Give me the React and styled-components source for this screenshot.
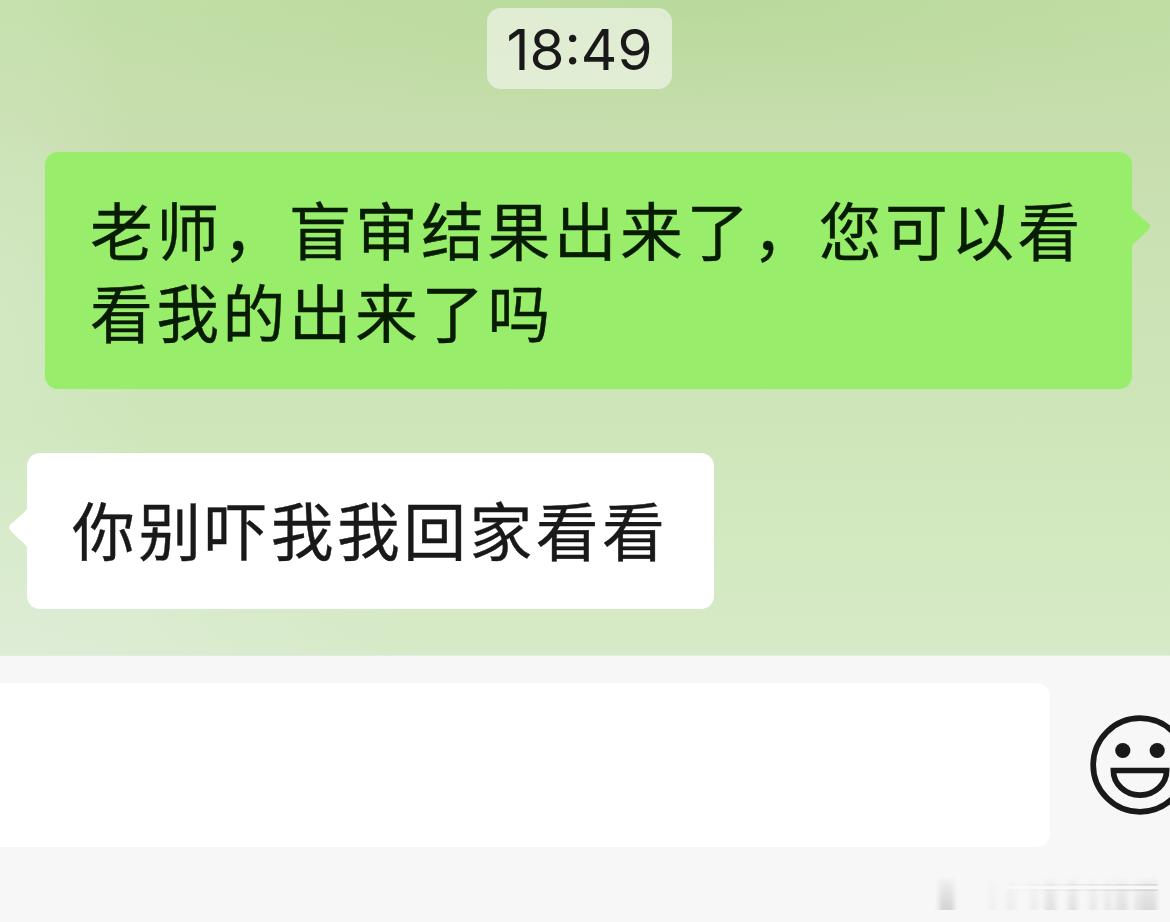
import React from 'react';
import styled, { createGlobalStyle } from 'styled-components';

const GlobalStyle = createGlobalStyle`
  * {
    box-sizing: border-box;
  }

  body {
    margin: 0;
    overflow: hidden;
  }
`;

const Screen = styled.div`
  display: flex;
  flex-direction: column;
  width: 1170px;
  height: 922px;
  overflow: hidden;
  font-family: 'Noto Sans CJK SC', sans-serif;
  color: #191919;
`;

const Conversation = styled.main`
  display: flex;
  flex-direction: column;
  height: 655px;
  padding: 8px 38px 0 27px;
  background:
    radial-gradient(ellipse 420px 260px at 0% 105%, rgba(224, 237, 218, 0.9), rgba(224, 237, 218, 0) 100%),
    radial-gradient(ellipse 150px 420px at 0% 50%, rgba(212, 234, 198, 0.7), rgba(212, 234, 198, 0) 100%),
    radial-gradient(ellipse 680px 130px at 60% 0%, rgba(182, 216, 152, 0.75), rgba(182, 216, 152, 0) 100%),
    linear-gradient(180deg, #c3dfa8 0%, #c7ddad 20%, #cbe2b5 40%, #cee5ba 62%, #d2e9bf 80%, #d6eac7 100%);
`;

const Timestamp = styled.time`
  align-self: center;
  width: 185px;
  height: 81px;
  border-radius: 14px;
  background: rgba(240, 245, 234, 0.68);
  font-family: Inter, sans-serif;
  font-size: 56.6px;
  line-height: 83px;
  text-align: center;
`;

const Bubble = styled.div`
  position: relative;
  align-self: ${({ $mine }) => ($mine ? 'flex-end' : 'flex-start')};
  width: ${({ $mine }) => ($mine ? 1087 : 687)}px;
  height: ${({ $mine }) => ($mine ? 237 : 156)}px;
  margin-top: ${({ $mine }) => ($mine ? 63 : 64)}px;
  padding: ${({ $mine }) => ($mine ? '35px 44px 0 45px' : '34px 40px 0 45px')};
  border-radius: 13px;
  background: ${({ $mine }) => ($mine ? '#98ed6a' : '#ffffff')};
  color: ${({ $mine }) => ($mine ? '#071c02' : '#191919')};
`;

const Tail = styled.svg`
  position: absolute;
  top: 54px;
  ${({ $mine }) => ($mine ? 'right: -20px;' : 'left: -20px; transform: scaleX(-1);')}
  fill: ${({ $mine }) => ($mine ? '#98ed6a' : '#ffffff')};
`;

const Message = styled.p`
  margin: 0;
  font-size: 62.8px;
  line-height: 82px;
  letter-spacing: 3.45px;
  -webkit-text-stroke: 0.4px currentColor;
`;

const Composer = styled.footer`
  display: flex;
  height: 267px;
  padding-top: 27px;
  border-top: 1px solid #e6ebe2;
  background: #f7f7f7;
`;

const Input = styled.div`
  flex: 0 0 1050px;
  height: 164px;
  border-radius: 0 13px 13px 0;
  background: #ffffff;
`;

const Side = styled.div`
  position: relative;
  flex: 1;
  min-width: 0;
  padding: 31px 0 0 39px;
`;

const Smiley = styled.svg`
  display: block;
`;

const Smudge = styled.svg`
  position: absolute;
  right: 9px;
  top: 193px;
`;

const messages = [
  { id: 1, mine: true, text: '老师，盲审结果出来了，您可以看看我的出来了吗' },
  { id: 2, mine: false, text: '你别吓我我回家看看' },
];

// x, width and opacity of each faded streak
const streaks = [
  [4, 15, 0.2],
  [54, 8, 0.04],
  [72, 8, 0.06],
  [95, 8, 0.06],
  [110, 11, 0.13],
  [133, 9, 0.13],
  [154, 8, 0.08],
  [169, 8, 0.09],
  [181, 12, 0.13],
  [199, 10, 0.11],
  [208, 14, 0.16],
];

const App = () => {
  return (
    <>
      <GlobalStyle />
      <Screen>
        <Conversation>
          <Timestamp>18:49</Timestamp>
          {messages.map(({ id, mine, text }) => (
            <Bubble key={id} $mine={mine}>
              <Message>{text}</Message>
              <Tail $mine={mine} width="21" height="42" viewBox="0 0 21 42">
                <path d="M0 0 C2 5 6 7 9 10 L18 18 Q20 20.5 18 23 L9 32 C6 35 2 37 0 42Z" />
              </Tail>
            </Bubble>
          ))}
        </Conversation>
        <Composer>
          <Input />
          <Side>
            <Smiley width="102" height="102" viewBox="0 0 102 102" fill="none" stroke="#191919">
              <circle cx="51" cy="51" r="46.8" strokeWidth="5.7" />
              <circle cx="33.8" cy="36.5" r="7.6" fill="#191919" stroke="none" />
              <circle cx="68.2" cy="36.5" r="7.6" fill="#191919" stroke="none" />
              <path d="M24.4 56.5 H77.6 A26.6 24.6 0 0 1 24.4 56.5Z" strokeWidth="5.7" />
            </Smiley>
            <Smudge width="226" height="38" viewBox="0 0 226 38">
              <defs>
                <linearGradient id="fade" x1="0" y1="0" x2="0" y2="1">
                  <stop offset="0" stopColor="#777" stopOpacity="0" />
                  <stop offset="0.3" stopColor="#777" stopOpacity="0.4" />
                  <stop offset="1" stopColor="#777" />
                </linearGradient>
                <linearGradient id="line" x1="0" y1="0" x2="1" y2="0">
                  <stop offset="0" stopColor="#777" stopOpacity="0" />
                  <stop offset="1" stopColor="#777" stopOpacity="0.2" />
                </linearGradient>
                <filter id="soft" x="-50%" y="-10%" width="200%" height="120%">
                  <feGaussianBlur stdDeviation="2.4 0.5" />
                </filter>
              </defs>
              {streaks.map(([x, width, opacity]) => (
                <rect
                  key={x}
                  x={x}
                  y="0"
                  width={width}
                  height="34"
                  fill="url(#fade)"
                  opacity={opacity * 1.4}
                  filter="url(#soft)"
                />
              ))}
              <rect x="70" y="8" width="153" height="1.5" fill="url(#line)" />
              <rect x="70" y="10" width="154" height="3" fill="#f9f9f9" />
              <rect x="70" y="13.5" width="153" height="1.5" fill="url(#line)" />
            </Smudge>
          </Side>
        </Composer>
      </Screen>
    </>
  );
};

export default App;
